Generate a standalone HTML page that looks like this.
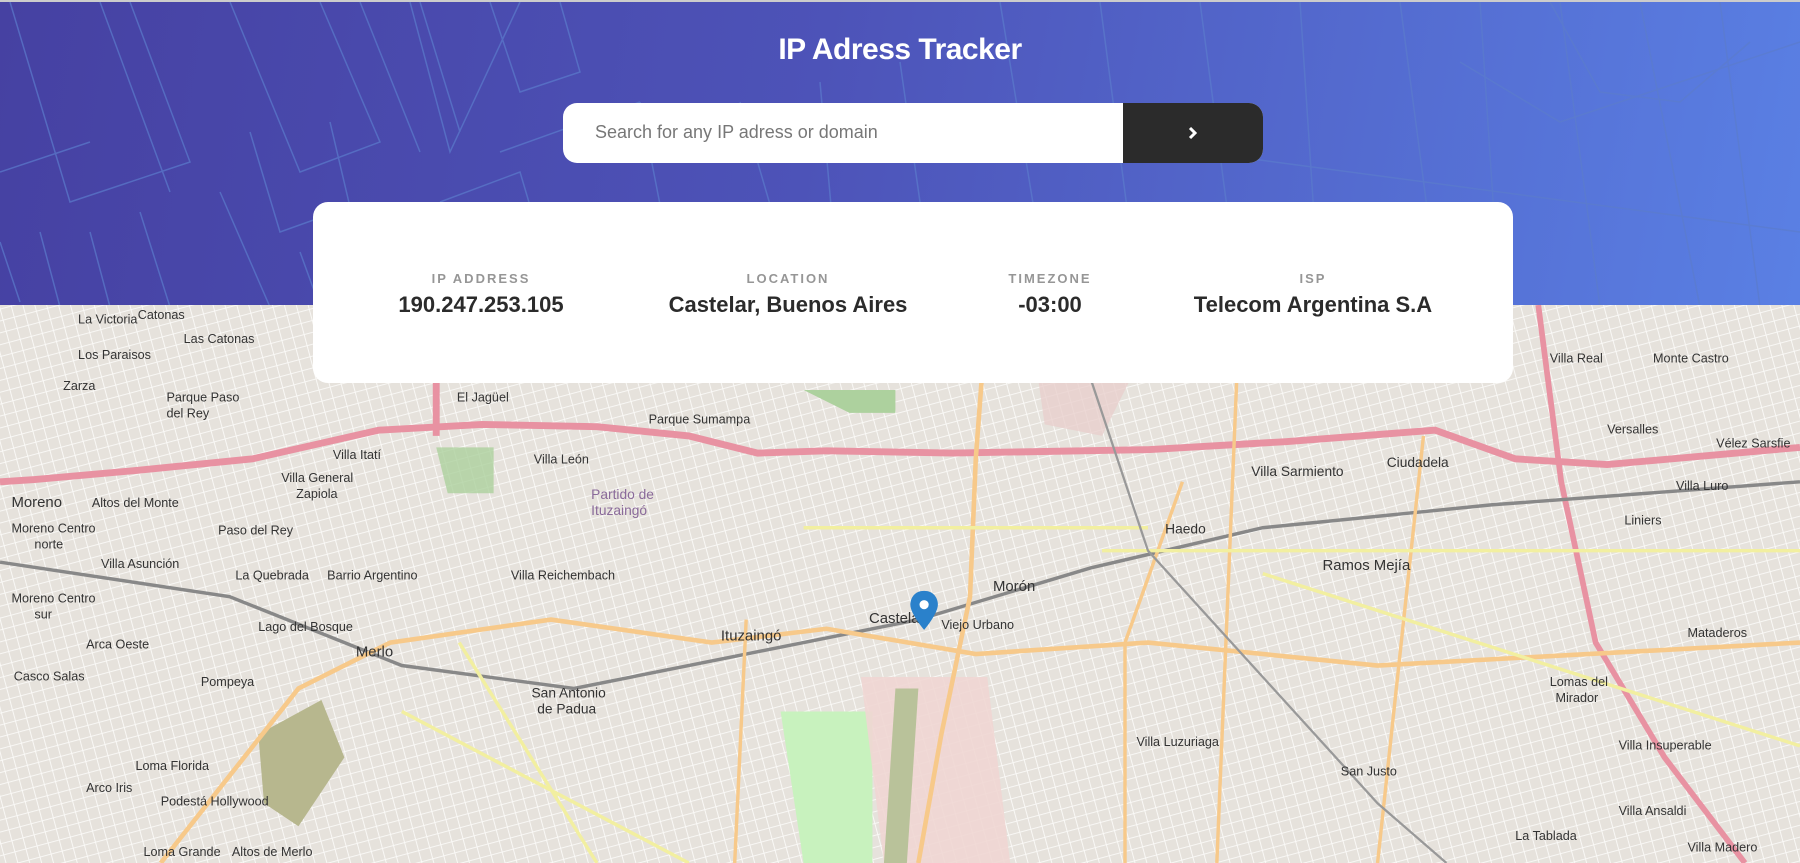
<!DOCTYPE html>
<html><head><meta charset="utf-8"><style>
*{margin:0;padding:0;box-sizing:border-box}
body{width:1800px;height:863px;overflow:hidden;font-family:"Liberation Sans",sans-serif;position:relative;background:#e8e5e0}
#hdr{position:absolute;left:0;top:0;width:1800px;height:305px;background:linear-gradient(100deg,#4641a2 0%,#4d53b8 45%,#5a80e4 100%);border-top:2px solid #ccc;overflow:hidden}
#map{position:absolute;left:0;top:305px;width:1800px;height:558px}
h1{position:absolute;top:33px;width:100%;text-align:center;color:#fff;font-size:30px;font-weight:bold;letter-spacing:-0.5px}
#search{position:absolute;left:563px;top:103px;width:700px;height:60px;border-radius:14px;background:#fff;overflow:hidden}
#search span{position:absolute;left:32px;top:19px;font-size:18px;color:#777}
#btn{position:absolute;right:0;top:0;width:140px;height:60px;background:#2b2b2b}
#card{position:absolute;left:313px;top:202px;width:1200px;height:181px;background:#fff;border-radius:15px}
.c{position:absolute;top:69px;text-align:center;transform:translateX(-50%);white-space:nowrap}
.c b{display:block;font-size:13px;letter-spacing:2px;color:#969696;margin-bottom:6px}
.c i{font-style:normal;font-weight:bold;font-size:22px;color:#2b2b2b}
</style></head><body>
<div id="hdr">
<svg width="1800" height="305" viewBox="0 0 1800 305" style="position:absolute;left:0;top:0" fill="none" stroke="#5b7ccc" stroke-opacity=".7" stroke-width="1.5">
<path d="M10 0L70 200 190 160 130 0M100 0L170 190M230 0L300 170 380 140 320 0M250 130L280 230 350 205 330 120M0 170L90 140M0 240L20 300M40 230L60 305M90 230L110 305M140 210L170 305M220 190L270 305M300 250L320 305M370 230L390 305M410 0L450 150 520 0M420 0L460 130M360 0L420 150M490 0L520 90 580 70 560 0M440 200L520 170 560 305M500 150L640 100M640 100L680 305M740 100L800 305M820 80L840 305M900 60L920 200M1000 0L1050 305M1100 0L1140 305M1200 0L1240 305M1300 0L1320 305M1400 0L1440 305M1480 0L1500 305M1560 0L1600 305M1640 0L1700 305M1720 0L1760 305M1460 60L1560 120 1800 40M1200 150L1800 230M1550 0L1600 90 1680 100 1750 40"/>
</svg>
</div>
<svg id="map" viewBox="0 266 1568 486" preserveAspectRatio="none">
<defs><pattern id="g" width="10" height="10" patternUnits="userSpaceOnUse" patternTransform="rotate(-15)"><rect width="10" height="10" fill="#e6e2dc"/><path d="M0 0H10M0 0V10" stroke="#fbfaf8" stroke-width="1.6"/></pattern></defs>
<rect x="0" y="266" width="1568" height="486" fill="url(#g)"/>
<path d="M700 340 L780 340 780 360 740 360Z" fill="#add19e"/>
<path d="M680 620 L760 620 760 752 700 752Z" fill="#c8f2be"/>
<path d="M750 590 L860 590 880 752 770 752Z" fill="#efd6d3" opacity=".9"/>
<path d="M780 600 L800 600 790 752 770 752Z" fill="#b9c29a"/>
<path d="M225 640 L280 610 300 660 260 720 230 700Z" fill="#b7b78e"/>
<path d="M900 300 L1000 300 960 380 910 370Z" fill="#e8d0cd" opacity=".8"/>
<path d="M380 390 L430 390 430 430 390 430Z" fill="#add19e" opacity=".8"/>
<path d="M0 420 L30 418 120 410 220 400 330 375 420 370 520 372 600 380 660 395 720 393 830 395 1000 392 1120 385 1250 375 1320 400 1400 405 1568 390" stroke="#e892a2" stroke-width="6" fill="none"/>
<path d="M380 266 L380 380" stroke="#e892a2" stroke-width="6"/>
<path d="M1340 266 L1360 420 1390 560 1450 660 1520 752" stroke="#e892a2" stroke-width="5" fill="none"/>
<path d="M0 490 L200 520 350 580 500 600 650 570 800 540 950 495 1100 460 1300 440 1568 420" stroke="#888" stroke-width="3" fill="none"/>
<path d="M140 752 L260 600 340 560 480 540 620 560 720 548 850 570 1000 560 1200 580 1568 560" stroke="#f7c98a" stroke-width="4" fill="none"/>
<path d="M860 266 L850 400 845 520 820 640 800 752" stroke="#f7c98a" stroke-width="4" fill="none"/>
<path d="M650 540 L640 752 M1030 420 L980 560 980 752 M1080 266 L1060 752 M1240 380 L1200 752" stroke="#f7c98a" stroke-width="3" fill="none"/>
<path d="M350 620 L600 752 M400 560 L520 752 M960 480 L1568 480 M1100 500 L1568 650 M700 460 L1000 460" stroke="#f2efa0" stroke-width="3" fill="none"/>
<path d="M950 330 L1000 480 1200 700 1260 752" stroke="#999" stroke-width="2" fill="none"/>
<g font-family="Liberation Sans,sans-serif" font-size="11" fill="#333">
<text x="120" y="278">Catonas</text><text x="68" y="282">La Victoria</text><text x="160" y="299">Las Catonas</text><text x="68" y="313">Los Paraisos</text><text x="55" y="340">Zarza</text><text x="145" y="350">Parque Paso</text><text x="145" y="364">del Rey</text>
<text x="398" y="350">El Jagüel</text><text x="565" y="369">Parque Sumampa</text><text x="465" y="404">Villa León</text><text x="245" y="420">Villa General</text><text x="258" y="434">Zapiola</text><text x="290" y="400">Villa Itatí</text>
<text x="10" y="442" font-size="13">Moreno</text><text x="80" y="442">Altos del Monte</text><text x="190" y="466">Paso del Rey</text><text x="88" y="495">Villa Asunción</text><text x="205" y="505">La Quebrada</text><text x="285" y="505">Barrio Argentino</text><text x="445" y="505">Villa Reichembach</text>
<text x="225" y="550">Lago del Bosque</text><text x="75" y="565">Arca Oeste</text><text x="310" y="572" font-size="13">Merlo</text><text x="175" y="598">Pompeya</text><text x="12" y="593">Casco Salas</text><text x="463" y="608" font-size="12">San Antonio</text><text x="468" y="622" font-size="12">de Padua</text>
<text x="628" y="558" font-size="13">Ituzaingó</text><text x="757" y="543" font-size="13">Castelar</text><text x="820" y="548">Viejo Urbano</text><text x="865" y="515" font-size="13">Morón</text><text x="1015" y="465" font-size="12">Haedo</text><text x="1152" y="497" font-size="13">Ramos Mejía</text><text x="1090" y="415" font-size="12">Villa Sarmiento</text><text x="1208" y="407" font-size="12">Ciudadela</text>
<text x="1350" y="316">Villa Real</text><text x="1440" y="316">Monte Castro</text><text x="1400" y="378">Versalles</text><text x="1495" y="390">Vélez Sarsfie</text><text x="1460" y="427">Villa Luro</text><text x="1415" y="457">Liniers</text><text x="1470" y="555">Mataderos</text><text x="1350" y="598">Lomas del</text><text x="1355" y="612">Mirador</text><text x="1410" y="653">Villa Insuperable</text><text x="1168" y="676">San Justo</text><text x="990" y="650">Villa Luzuriaga</text><text x="1410" y="710">Villa Ansaldi</text><text x="1320" y="732">La Tablada</text><text x="1470" y="742">Villa Madero</text>
<text x="118" y="671">Loma Florida</text><text x="75" y="690">Arco Iris</text><text x="140" y="702">Podestá Hollywood</text><text x="125" y="746">Loma Grande</text><text x="202" y="746">Altos de Merlo</text><text x="10" y="525">Moreno Centro</text><text x="30" y="539">sur</text><text x="10" y="464">Moreno Centro</text><text x="30" y="478">norte</text>
<text x="515" y="435" fill="#8a6a9a" font-size="12">Partido de</text><text x="515" y="449" fill="#8a6a9a" font-size="12">Ituzaingó</text>
</g>
<path d="M805 515 c-8 0 -12 6 -12 12 c0 8 12 22 12 22 c0 0 12 -14 12 -22 c0 -6 -4 -12 -12 -12z" fill="#2a81cb"/><circle cx="805" cy="527" r="4" fill="#fff"/>
</svg>
<h1>IP Adress Tracker</h1>
<div id="search"><span>Search for any IP adress or domain</span><div id="btn"><svg width="140" height="60"><path d="M67 25l5 5-5 5" stroke="#fff" stroke-width="3" fill="none"/></svg></div></div>
<div id="card">
<div class="c" style="left:168px"><b>IP ADDRESS</b><i>190.247.253.105</i></div>
<div class="c" style="left:475px"><b>LOCATION</b><i>Castelar, Buenos Aires</i></div>
<div class="c" style="left:737px"><b>TIMEZONE</b><i>-03:00</i></div>
<div class="c" style="left:1000px"><b>ISP</b><i>Telecom Argentina S.A</i></div>
</div>
</body></html>
